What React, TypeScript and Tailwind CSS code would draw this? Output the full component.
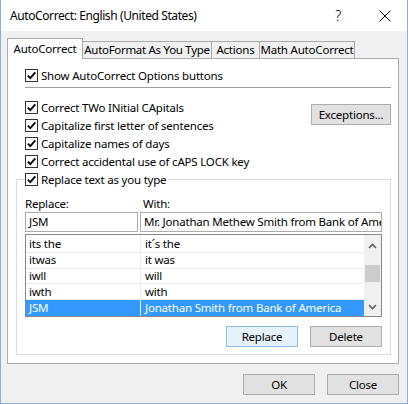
import React from 'react'

const Check = () => (
  <span className="w-[13px] h-[13px] shrink-0 border border-[#333333] bg-white flex items-center justify-center">
    <svg width="11" height="11" viewBox="0 0 11 11">
      <path d="M1.8 5.6 L4.3 8.2 L9.3 2.4" fill="none" stroke="#000" strokeWidth="1.8" />
    </svg>
  </span>
)

const CheckRow = ({ label }: { label: string }) => (
  <div className="h-[15px] flex items-center gap-[3px] whitespace-nowrap">
    <Check />
    <span>{label}</span>
  </div>
)

const Btn = ({ label, primary }: { label: string; primary?: boolean }) => (
  <button
    className={`w-[72px] h-[21px] flex items-center justify-center border ${
      primary ? 'bg-[#e5f1fb] border-[#8dbdeb]' : 'bg-[#e1e1e1] border-[#adadad]'
    }`}
  >
    {label}
  </button>
)

const rows = [
  { from: 'its the', to: 'it\u00b4s the' },
  { from: 'itwas', to: 'it was' },
  { from: 'iwll', to: 'will' },
  { from: 'iwth', to: 'with' },
  { from: 'JSM', to: 'Jonathan Smith from Bank of America' },
]

export default function App() {
  return (
    <div className="w-[408px] h-[404px] flex flex-col bg-[#f0f0f0] border-x border-b border-[#8aaedd] text-[11.5px] tracking-[-0.2px] text-black font-['Noto_Sans',sans-serif] leading-none overflow-hidden">
      <div className="h-[31px] shrink-0 bg-white flex items-center pl-[9px]">
        <span className="text-[12px] tracking-[-0.4px]">AutoCorrect: English (United States)</span>
        <span className="ml-auto mr-[38px] text-[14px] font-light">?</span>
        <svg width="12" height="12" viewBox="0 0 12 12" className="mr-[16px]">
          <path d="M0.5 0.5 L11.5 11.5 M11.5 0.5 L0.5 11.5" stroke="#000" strokeWidth="1" />
        </svg>
      </div>

      <div className="mt-[7px] ml-[6px] h-[20px] flex items-end whitespace-nowrap">
        <div className="relative z-10 w-[76px] h-[21px] -mb-px bg-white border border-b-0 border-[#acacac] flex items-center justify-center">
          AutoCorrect
        </div>
        <div className="w-[129px] h-[17px] border border-b-0 border-l-0 border-[#acacac] bg-[#f0f0f0] flex items-center justify-center tracking-[-0.3px]">
          AutoFormat As You Type
        </div>
        <div className="w-[48px] h-[17px] border border-b-0 border-l-0 border-[#acacac] bg-[#f0f0f0] flex items-center justify-center">
          Actions
        </div>
        <div className="w-[95px] h-[17px] border border-b-0 border-l-0 border-[#acacac] bg-[#f0f0f0] flex items-center justify-center">
          Math AutoCorrect
        </div>
      </div>

      <div className="ml-[6px] w-[392px] h-[306px] shrink-0 bg-white border border-[#acacac] flex flex-col">
        <div className="mt-[9px] pl-[17px]">
          <CheckRow label="Show AutoCorrect Options buttons" />
        </div>
        <div className="mt-[4px] ml-[17px] mr-[7px] h-px bg-[#a0a0a0]" />

        <div className="mt-[12px] pl-[17px] pr-[7px] flex">
          <div className="flex flex-col gap-[3px]">
            <CheckRow label="Correct TWo INitial CApitals" />
            <CheckRow label="Capitalize first letter of sentences" />
            <CheckRow label="Capitalize names of days" />
            <CheckRow label="Correct accidental use of cAPS LOCK key" />
          </div>
          <button className="ml-auto mt-[4px] w-[80px] h-[21px] flex items-center justify-center bg-[#e1e1e1] border border-[#adadad]">
            Exceptions...
          </button>
        </div>

        <fieldset className="min-w-0 mt-[3px] ml-[8px] mr-[7px] border border-[#dcdcdc] px-[8px] pt-0 pb-[7px]">
          <legend className="pr-[2px]">
            <CheckRow label="Replace text as you type" />
          </legend>
          <div className="mt-[9px] h-[15px] flex items-center">
            <span className="w-[118px]">Replace:</span>
            <span>With:</span>
          </div>
          <div className="mt-px flex gap-[2px]">
            <div className="w-[113px] h-[20px] border border-[#ababab] flex items-center pl-[3px]">JSM</div>
            <div className="flex-1 min-w-0 h-[20px] border border-[#ababab] flex items-center pl-[3px] overflow-hidden whitespace-nowrap">
              Mr. Jonathan Methew Smith from Bank of America
            </div>
          </div>
          <div className="mt-[2px] h-[83px] border border-[#828790] flex">
            <div className="flex-1 min-w-0 flex flex-col">
              {rows.map((r, i) => (
                <div
                  key={r.from}
                  className={`flex ${i === 0 ? 'h-[18px]' : 'h-[16px]'} ${
                    i === rows.length - 1 ? 'bg-[#3399ff] text-white' : 'border-b border-[#ececec]'
                  }`}
                >
                  <div className="w-[115px] shrink-0 pl-[3px] flex items-center border-r border-[#ececec]">
                    {r.from}
                  </div>
                  <div className="flex-1 min-w-0 pl-[4px] flex items-center whitespace-nowrap overflow-hidden">
                    {r.to}
                  </div>
                </div>
              ))}
            </div>
            <div className="w-[17px] shrink-0 bg-[#f0f0f0] flex flex-col items-center">
              <svg width="9" height="6" viewBox="0 0 9 6" className="mt-[8px]">
                <path d="M1 5 L4.5 1.5 L8 5" fill="none" stroke="#606060" strokeWidth="1.6" />
              </svg>
              <div className="mt-[16px] w-[15px] h-[17px] bg-[#cdcdcd]" />
              <svg width="9" height="6" viewBox="0 0 9 6" className="mt-auto mb-[6px]">
                <path d="M1 1 L4.5 4.5 L8 1" fill="none" stroke="#606060" strokeWidth="1.6" />
              </svg>
            </div>
          </div>
          <div className="mt-[9px] flex justify-end gap-[12px]">
            <Btn label="Replace" primary />
            <Btn label="Delete" />
          </div>
        </fieldset>
      </div>

      <div className="mt-[10px] mr-[8px] flex justify-end gap-[12px]">
        <Btn label="OK" />
        <Btn label="Close" />
      </div>
    </div>
  )
}
